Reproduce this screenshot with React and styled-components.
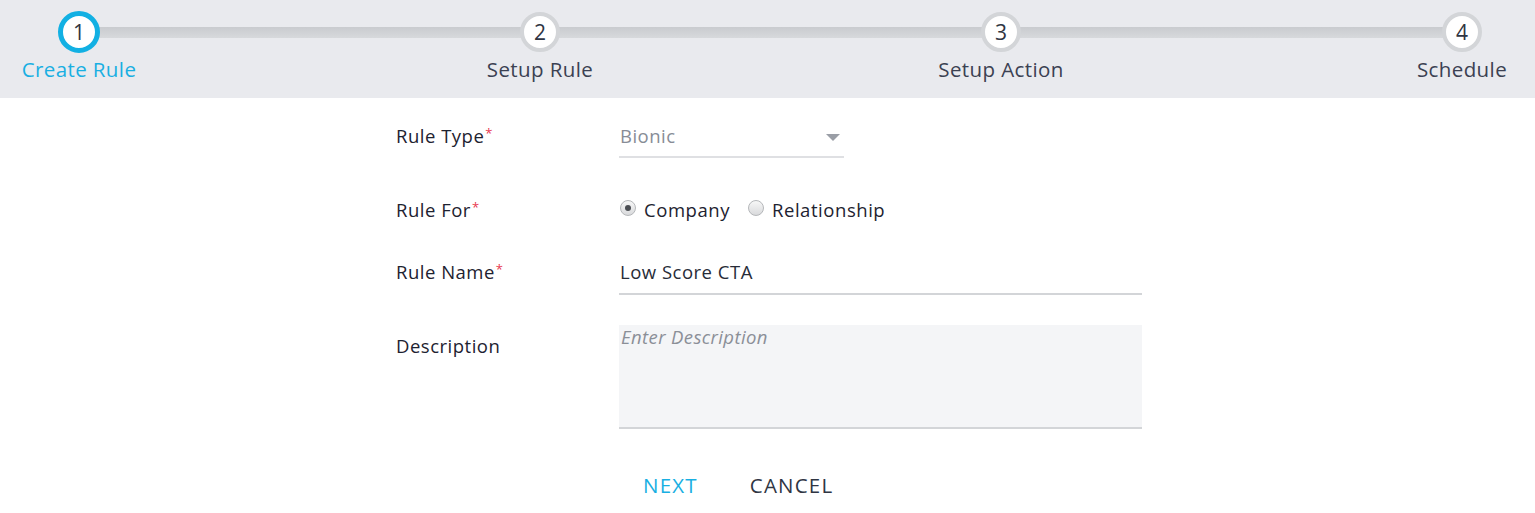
import React from "react";
import styled, { createGlobalStyle } from "styled-components";

const Global = createGlobalStyle`
  html, body { margin: 0; padding: 0; background: #fff; }
  body { font-family: "Open Sans", "Noto Sans", Arial, sans-serif; }
  * { box-sizing: border-box; }
`;

const Page = styled.div`
  width: 1535px;
  height: 513px;
  overflow: hidden;
  background: #fff;
`;

const Header = styled.div`
  height: 98px;
  background: #e9eaee;
  padding: 11px 15px 0 21px;
`;

const Steps = styled.div`
  position: relative;
  display: flex;
  justify-content: space-between;
  &::before {
    content: "";
    position: absolute;
    left: 58px;
    right: 58px;
    top: 16px;
    height: 11px;
    background: linear-gradient(#c9cbcf, #d7d9dc);
    z-index: 0;
  }
`;

const Step = styled.div`
  position: relative;
  z-index: 1;
  width: 116px;
  display: flex;
  flex-direction: column;
  align-items: center;
`;

const Circle = styled.div`
  width: ${(p) => (p.$active ? 42 : 40)}px;
  height: ${(p) => (p.$active ? 42 : 40)}px;
  margin-top: ${(p) => (p.$active ? 0 : 1)}px;
  margin-bottom: ${(p) => (p.$active ? 0 : 1)}px;
  border-radius: 50%;
  background: #fff;
  border: ${(p) => (p.$active ? "5px solid #12b0e3" : "4px solid #d3d5d8")};
  display: flex;
  align-items: center;
  justify-content: center;
  font-size: 21px;
  color: #2f3543;
  line-height: 1;
`;

const StepLabel = styled.div`
  margin-top: 4px;
  font-size: 20.5px;
  letter-spacing: 0.4px;
  line-height: 24px;
  white-space: nowrap;
  color: ${(p) => (p.$active ? "#19afe2" : "#3b4152")};
`;

const Form = styled.div`
  padding: 26px 0 0 396px;
`;

const Row = styled.div`
  display: grid;
  grid-template-columns: 223px 523px;
  align-items: start;
  margin-bottom: ${(p) => p.$mb || 0}px;
`;

const Label = styled.div`
  font-size: 18.5px;
  letter-spacing: 0.5px;
  line-height: 24px;
  color: #1d2230;
  padding-top: ${(p) => p.$pt || 0}px;
`;

const Req = styled.span`
  color: #e8384f;
  font-size: 13px;
  line-height: 0;
  vertical-align: 5px;
  margin-left: 1px;
  letter-spacing: 0;
`;

const Select = styled.div`
  width: 225px;
  display: flex;
  align-items: center;
  justify-content: space-between;
  padding: 0 4px 8px 1px;
  border-bottom: 2px solid #dfe0e3;
  font-size: 18.5px;
  letter-spacing: 0.5px;
  line-height: 24px;
  color: #878c96;
`;

const Caret = styled.span`
  width: 0;
  height: 0;
  border-left: 7px solid transparent;
  border-right: 7px solid transparent;
  border-top: 7px solid #9a9ea6;
  margin-top: 3px;
`;

const Radios = styled.div`
  display: flex;
  align-items: center;
  gap: 18px;
  padding-left: 1px;
`;

const RadioOption = styled.label`
  display: flex;
  align-items: center;
  gap: 8px;
  font-size: 18.5px;
  letter-spacing: 0.55px;
  line-height: 24px;
  color: #1d2230;
`;

const RadioDot = styled.span`
  width: 16px;
  height: 16px;
  border-radius: 50%;
  border: 1px solid #b5b7ba;
  background: linear-gradient(#f7f7f7, #d9dadc);
  display: flex;
  align-items: center;
  justify-content: center;
  margin-top: -4px;
  &::after {
    content: "";
    width: 6px;
    height: 6px;
    border-radius: 50%;
    background: ${(p) => (p.$checked ? "#4a4d52" : "transparent")};
  }
`;

const TextInput = styled.div`
  width: 523px;
  padding: 0 1px 9px;
  border-bottom: 2px solid #d3d5d8;
  font-size: 18.5px;
  letter-spacing: 0.5px;
  line-height: 24px;
  color: #272c38;
`;

const TextArea = styled.div`
  width: 523px;
  height: 104px;
  background: #f4f5f7;
  border-bottom: 2px solid #d3d5d8;
  padding: 0 2px;
  font-size: 18.5px;
  letter-spacing: 0.4px;
  line-height: 24px;
  font-style: italic;
  color: #8b8f97;
`;

const Actions = styled.div`
  display: flex;
  gap: 4px;
  grid-column: 2;
`;

const Button = styled.button`
  background: none;
  border: none;
  padding: 0 24px;
  font-family: inherit;
  font-size: 20.5px;
  letter-spacing: 1.2px;
  line-height: 24px;
  color: ${(p) => (p.$primary ? "#19afe2" : "#2f3543")};
  cursor: pointer;
`;

const steps = ["Create Rule", "Setup Rule", "Setup Action", "Schedule"];

export default function App() {
  return (
    <Page>
      <Global />
      <Header>
        <Steps>
          {steps.map((s, i) => (
            <Step key={s}>
              <Circle $active={i === 0}>{i + 1}</Circle>
              <StepLabel $active={i === 0}>{s}</StepLabel>
            </Step>
          ))}
        </Steps>
      </Header>
      <Form>
        <Row $mb={40}>
          <Label>
            Rule Type<Req>*</Req>
          </Label>
          <Select>
            Bionic
            <Caret />
          </Select>
        </Row>
        <Row $mb={38}>
          <Label>
            Rule For<Req>*</Req>
          </Label>
          <Radios>
            <RadioOption>
              <RadioDot $checked />
              Company
            </RadioOption>
            <RadioOption>
              <RadioDot />
              Relationship
            </RadioOption>
          </Radios>
        </Row>
        <Row $mb={30}>
          <Label>
            Rule Name<Req>*</Req>
          </Label>
          <TextInput>Low Score CTA</TextInput>
        </Row>
        <Row $mb={44}>
          <Label $pt={9}>Description</Label>
          <TextArea>Enter Description</TextArea>
        </Row>
        <Row>
          <Actions>
            <Button $primary>NEXT</Button>
            <Button>CANCEL</Button>
          </Actions>
        </Row>
      </Form>
    </Page>
  );
}
